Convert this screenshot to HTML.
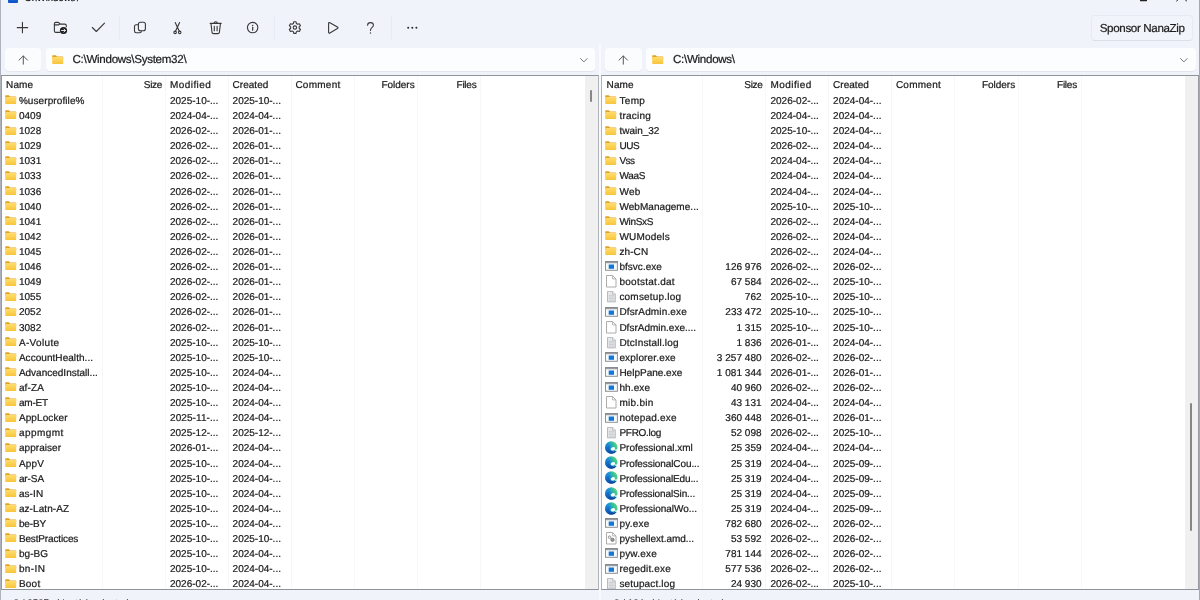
<!DOCTYPE html>
<html lang="en"><head><meta charset="utf-8"><title>C:\Windows\</title>
<style>
*{margin:0;padding:0;box-sizing:border-box}
html,body{width:1200px;height:600px;overflow:hidden;background:#f0f3fa}
body{position:relative;font-family:"Liberation Sans", sans-serif;color:#1a1a1a;font-size:10px;will-change:transform;text-rendering:geometricPrecision;-webkit-text-stroke:0.22px #1a1a1a}
.bl{position:absolute;left:0;top:0;width:1px;height:600px;background:#aeb2bc}
.br{position:absolute;left:1199px;top:0;width:1px;height:600px;background:#a4a8b2}
.split{position:absolute;left:599.4px;top:44px;width:1.4px;height:556px;background:#f8fafd}
.ticon{position:absolute;left:7.6px;top:-8px;width:10px;height:10.8px;background:linear-gradient(#3a8ff0,#0b4fc4);border-radius:1px}
.title{position:absolute;left:24.6px;top:-7.5px;font-size:9.5px;line-height:12px;color:#111;white-space:pre}
.wbtn{position:absolute;top:-8px}
.tb{position:absolute;left:0;top:0}
.sponsor{position:absolute;left:1091px;top:15px;width:102.4px;height:25.5px;border-radius:4px;background:#f2f4fb;border:1px solid #e7eaf2;border-bottom-color:#dcdfe8;font-size:11.6px;letter-spacing:-0.35px;line-height:25.8px;text-align:center;color:#1f1f1f;white-space:nowrap}
.pane{position:absolute;top:0;width:600px;height:600px}
.up{position:absolute;left:4.5px;top:48px;width:36.5px;height:22.6px;border-radius:4px;background:#fbfcfe;box-shadow:0 1px 0 #e4e7ef}
.up svg{position:absolute;left:13.1px;top:6.6px}
.addr{position:absolute;left:45.5px;top:48px;width:549.6px;height:22.6px;border-radius:4px;background:#fcfdff;box-shadow:0 1px 0 #e2e5ed;white-space:nowrap}
.aic{position:absolute;left:6.4px;top:7.2px}
.path{position:absolute;left:27px;top:4.7px;font-size:11.6px;letter-spacing:-0.3px;line-height:14px;color:#1c1c1c;white-space:pre}
.chev{position:absolute;left:534.2px;top:9.6px}
.inner{position:absolute;top:0;width:585px;height:513px}
.list{position:absolute;left:1px;top:75px;width:598px;height:514.7px;background:#fff;border:1px solid #8f939b;border-left-color:var(--bl);border-right-color:var(--brc);overflow:hidden}
.sep{position:absolute;top:0;width:1px;height:513px;background:#f6f7f9}
.hdr{position:absolute;left:0;top:0;width:585px;height:16px;line-height:16px;white-space:nowrap}
.hdr span,.row span{position:absolute;top:0;white-space:pre}
.hdr span{top:4.1px;line-height:12px}
.row{position:absolute;left:0;width:585px;height:15px;line-height:12px;white-space:nowrap}
.row span{top:3.3px}
.ic{position:absolute}
.c1{left:16.9px}
.hdr .c1{left:4px}
.c2{right:425.1px;text-align:right}
.row .c2{right:425.9px}
.c3{left:168px}
.c4{left:230.6px}
.c5{left:293.4px}
.c6{right:172.4px}
.c7{right:110.6px}
.sb{position:absolute;right:0;top:0;width:13px;height:513px;background:#f0f0f0}
.sb i{position:absolute;left:5.2px;width:1.8px;background:#868686;border-radius:1px}
.status{position:absolute;left:13.6px;top:597.6px;font-size:9.8px;line-height:12px;color:#333;white-space:pre;-webkit-text-stroke:0}
</style></head>
<body>
<svg width="0" height="0" style="position:absolute"><defs>
<linearGradient id="fg" x1="0" y1="0" x2="0" y2="1"><stop offset="0" stop-color="#ffdd6c"/><stop offset="1" stop-color="#f8c53c"/></linearGradient>
<linearGradient id="eg" x1="0.1" y1="0.75" x2="0.95" y2="0.3"><stop offset="0" stop-color="#1272cf"/><stop offset="0.45" stop-color="#1e96d0"/><stop offset="0.75" stop-color="#36c29a"/><stop offset="1" stop-color="#5ad776"/></linearGradient>
<linearGradient id="eg3" x1="0" y1="0" x2="0.7" y2="1"><stop offset="0" stop-color="#1a7fd6"/><stop offset="1" stop-color="#0d3f9a"/></linearGradient>
</defs></svg>
<div class="ticon"></div>
<div class="title">C:\Windows\</div>
<svg class="tb" width="1200" height="46" viewBox="0 0 1200 46" fill="none" stroke="#383838" stroke-width="1.1" stroke-linecap="round" stroke-linejoin="round">
<!-- window buttons (clipped) -->
<rect x="1140.5" y="-6" width="6" height="6.6" stroke="#222" stroke-width="1.1"/>
<path d="M1176.6 -8 L1186.6 1 M1186.6 -8 L1176.6 1" stroke="#222" stroke-width="1"/>
<!-- separators -->
<path d="M119.5 15.5 V39.5 M274.5 15.5 V39.5 M391.5 15.5 V39.5" stroke="#e8ebf3" stroke-width="1"/>
<!-- plus -->
<path d="M17.2 27.6 H27.7 M22.45 22.4 V32.8"/>
<!-- new folder -->
<path d="M59.6 32.4 H55.8 Q54.4 32.4 54.4 31 V23.8 Q54.4 22.4 55.8 22.4 H57.9 Q58.5 22.4 59 22.9 L60.2 24.1 H64.8 Q66.3 24.1 66.3 25.6 V26.8"/>
<path d="M54.4 24.9 H57.9 Q58.5 24.9 59 24.5 L59.8 23.8"/>
<circle cx="63.5" cy="30.5" r="3.6" fill="#1c1c1c" stroke="none"/>
<path d="M61.5 30.5 H65.3 M63.9 29 L65.4 30.5 L63.9 32" stroke="#fff" stroke-width="0.9"/>
<!-- check -->
<path d="M92.3 27.5 L96.3 31.5 L104.5 23.2"/>
<!-- copy -->
<rect x="138.4" y="22.2" width="7" height="8.6" rx="2"/>
<path d="M138.2 24.8 H136.2 Q134.5 24.8 134.5 26.5 V31.1 Q134.5 32.8 136.2 32.8 H139.6 Q141.3 32.8 141.3 31.2 V31"/>
<!-- cut -->
<path d="M175.2 22.5 L179.3 31.3 M179.6 22.5 L175.5 31.3"/>
<circle cx="175.1" cy="32.4" r="1.25"/><circle cx="179.7" cy="32.4" r="1.25"/>
<!-- trash -->
<path d="M210.2 23.4 H221.2 M214 23.2 Q214 21.7 215.7 21.7 Q217.4 21.7 217.4 23.2 M211 23.6 L212 32.3 Q212.2 33.6 213.6 33.6 H217.8 Q219.2 33.6 219.4 32.3 L220.4 23.6 M214.3 26.3 V30.8 M217.1 26.3 V30.8"/>
<!-- info -->
<circle cx="252.65" cy="27.6" r="5.2"/>
<path d="M252.65 27.3 V30.2" stroke-width="1.2"/><circle cx="252.65" cy="25.5" r="0.75" fill="#383838" stroke="none"/>
<!-- gear -->
<path d="M293.36 23.59 L293.77 21.81 L296.03 21.81 L296.44 23.59 L297.61 24.26 L299.35 23.73 L300.48 25.68 L299.15 26.93 L299.15 28.27 L300.48 29.52 L299.35 31.47 L297.61 30.94 L296.44 31.61 L296.03 33.39 L293.77 33.39 L293.36 31.61 L292.19 30.94 L290.45 31.47 L289.32 29.52 L290.65 28.27 L290.65 26.93 L289.32 25.68 L290.45 23.73 L292.19 24.26 Z" stroke-linejoin="round"/>
<circle cx="294.9" cy="27.6" r="1.7"/>
<!-- play -->
<path d="M328.6 23.4 Q328.6 22 329.9 22.7 L337.4 27 Q338.6 27.8 337.4 28.6 L329.9 32.9 Q328.6 33.6 328.6 32.2 Z"/>
<!-- question -->
<path d="M367.6 25.2 Q367.6 22.6 370.5 22.6 Q373.4 22.6 373.4 25 Q373.4 26.6 371.9 27.6 Q370.5 28.6 370.5 30.4"/>
<circle cx="370.5" cy="33" r="0.7" fill="#3b3b3b" stroke="none"/>
<!-- more -->
<g fill="#2b2b2b" stroke="none"><circle cx="408.2" cy="27.8" r="1"/><circle cx="412.3" cy="27.8" r="1"/><circle cx="416.4" cy="27.8" r="1"/></g>
</svg>

<div class="sponsor">Sponsor NanaZip</div>
<div class="pane" style="left:0px">
<div class="up"><svg width="11" height="10" viewBox="0 0 11 10"><path d="M5.3 1 V9.2 M1.1 5.1 L5.3 0.9 L9.5 5.1" fill="none" stroke="#555" stroke-width="1" stroke-linecap="round" stroke-linejoin="round"/></svg></div>
<div class="addr"><svg class="aic" width="12" height="10" viewBox="0 0 12 10"><path d="M0.2 1 Q0.2 0.3 0.9 0.3 H3.8 L5 1.5 H10.5 Q11.2 1.5 11.2 2.2 V4 H0.2 Z" fill="#e2a325"/><rect x="0.2" y="2" width="11" height="6.9" rx="0.6" fill="url(#fg)"/></svg><span class="path">C:\Windows\System32\</span><svg class="chev" width="8" height="5" viewBox="0 0 8 5"><path d="M0.6 0.6 L3.9 3.9 L7.2 0.6" fill="none" stroke="#777" stroke-width="1" stroke-linecap="round" stroke-linejoin="round"/></svg></div>
<div class="list" style="left:1.0px;--bl:#979aa2;--brc:#b0b3b9"><div class="inner" style="left:0.0px">
<i class="sep" style="left:99.5px"></i>
<i class="sep" style="left:162.7px"></i>
<i class="sep" style="left:225.7px"></i>
<i class="sep" style="left:288.7px"></i>
<i class="sep" style="left:351.9px"></i>
<i class="sep" style="left:415.3px"></i>
<i class="sep" style="left:478.1px"></i>
<div class="hdr"><span class="c1" style="letter-spacing:0.16px">Name</span><span class="c2" style="letter-spacing:-0.34px">Size</span><span class="c3" style="letter-spacing:0.43px">Modified</span><span class="c4" style="letter-spacing:0.02px">Created</span><span class="c5" style="letter-spacing:0.25px">Comment</span><span class="c6" style="letter-spacing:-0.03px">Folders</span><span class="c7" style="letter-spacing:-0.25px">Files</span></div>
<div class="row" style="top:16.60px"><svg class="ic" style="left:2.9px;top:2.7px" width="12" height="10" viewBox="0 0 12 10"><path d="M0.2 1 Q0.2 0.3 0.9 0.3 H3.8 L5 1.5 H10.5 Q11.2 1.5 11.2 2.2 V4 H0.2 Z" fill="#e2a325"/><rect x="0.2" y="2" width="11" height="6.9" rx="0.6" fill="url(#fg)"/></svg><span class="c1" style="letter-spacing:0.09px">%userprofile%</span><span class="c2"></span><span class="c3">2025-10-...</span><span class="c4">2025-10-...</span></div>
<div class="row" style="top:31.71px"><svg class="ic" style="left:2.9px;top:2.7px" width="12" height="10" viewBox="0 0 12 10"><path d="M0.2 1 Q0.2 0.3 0.9 0.3 H3.8 L5 1.5 H10.5 Q11.2 1.5 11.2 2.2 V4 H0.2 Z" fill="#e2a325"/><rect x="0.2" y="2" width="11" height="6.9" rx="0.6" fill="url(#fg)"/></svg><span class="c1" style="letter-spacing:0.02px">0409</span><span class="c2"></span><span class="c3">2024-04-...</span><span class="c4">2024-04-...</span></div>
<div class="row" style="top:46.82px"><svg class="ic" style="left:2.9px;top:2.7px" width="12" height="10" viewBox="0 0 12 10"><path d="M0.2 1 Q0.2 0.3 0.9 0.3 H3.8 L5 1.5 H10.5 Q11.2 1.5 11.2 2.2 V4 H0.2 Z" fill="#e2a325"/><rect x="0.2" y="2" width="11" height="6.9" rx="0.6" fill="url(#fg)"/></svg><span class="c1" style="letter-spacing:0.02px">1028</span><span class="c2"></span><span class="c3">2026-02-...</span><span class="c4">2026-01-...</span></div>
<div class="row" style="top:61.93px"><svg class="ic" style="left:2.9px;top:2.7px" width="12" height="10" viewBox="0 0 12 10"><path d="M0.2 1 Q0.2 0.3 0.9 0.3 H3.8 L5 1.5 H10.5 Q11.2 1.5 11.2 2.2 V4 H0.2 Z" fill="#e2a325"/><rect x="0.2" y="2" width="11" height="6.9" rx="0.6" fill="url(#fg)"/></svg><span class="c1" style="letter-spacing:0.02px">1029</span><span class="c2"></span><span class="c3">2026-02-...</span><span class="c4">2026-01-...</span></div>
<div class="row" style="top:77.04px"><svg class="ic" style="left:2.9px;top:2.7px" width="12" height="10" viewBox="0 0 12 10"><path d="M0.2 1 Q0.2 0.3 0.9 0.3 H3.8 L5 1.5 H10.5 Q11.2 1.5 11.2 2.2 V4 H0.2 Z" fill="#e2a325"/><rect x="0.2" y="2" width="11" height="6.9" rx="0.6" fill="url(#fg)"/></svg><span class="c1" style="letter-spacing:0.02px">1031</span><span class="c2"></span><span class="c3">2026-02-...</span><span class="c4">2026-01-...</span></div>
<div class="row" style="top:92.15px"><svg class="ic" style="left:2.9px;top:2.7px" width="12" height="10" viewBox="0 0 12 10"><path d="M0.2 1 Q0.2 0.3 0.9 0.3 H3.8 L5 1.5 H10.5 Q11.2 1.5 11.2 2.2 V4 H0.2 Z" fill="#e2a325"/><rect x="0.2" y="2" width="11" height="6.9" rx="0.6" fill="url(#fg)"/></svg><span class="c1" style="letter-spacing:0.02px">1033</span><span class="c2"></span><span class="c3">2026-02-...</span><span class="c4">2026-01-...</span></div>
<div class="row" style="top:107.26px"><svg class="ic" style="left:2.9px;top:2.7px" width="12" height="10" viewBox="0 0 12 10"><path d="M0.2 1 Q0.2 0.3 0.9 0.3 H3.8 L5 1.5 H10.5 Q11.2 1.5 11.2 2.2 V4 H0.2 Z" fill="#e2a325"/><rect x="0.2" y="2" width="11" height="6.9" rx="0.6" fill="url(#fg)"/></svg><span class="c1" style="letter-spacing:0.02px">1036</span><span class="c2"></span><span class="c3">2026-02-...</span><span class="c4">2026-01-...</span></div>
<div class="row" style="top:122.37px"><svg class="ic" style="left:2.9px;top:2.7px" width="12" height="10" viewBox="0 0 12 10"><path d="M0.2 1 Q0.2 0.3 0.9 0.3 H3.8 L5 1.5 H10.5 Q11.2 1.5 11.2 2.2 V4 H0.2 Z" fill="#e2a325"/><rect x="0.2" y="2" width="11" height="6.9" rx="0.6" fill="url(#fg)"/></svg><span class="c1" style="letter-spacing:0.02px">1040</span><span class="c2"></span><span class="c3">2026-02-...</span><span class="c4">2026-01-...</span></div>
<div class="row" style="top:137.48px"><svg class="ic" style="left:2.9px;top:2.7px" width="12" height="10" viewBox="0 0 12 10"><path d="M0.2 1 Q0.2 0.3 0.9 0.3 H3.8 L5 1.5 H10.5 Q11.2 1.5 11.2 2.2 V4 H0.2 Z" fill="#e2a325"/><rect x="0.2" y="2" width="11" height="6.9" rx="0.6" fill="url(#fg)"/></svg><span class="c1" style="letter-spacing:0.02px">1041</span><span class="c2"></span><span class="c3">2026-02-...</span><span class="c4">2026-01-...</span></div>
<div class="row" style="top:152.59px"><svg class="ic" style="left:2.9px;top:2.7px" width="12" height="10" viewBox="0 0 12 10"><path d="M0.2 1 Q0.2 0.3 0.9 0.3 H3.8 L5 1.5 H10.5 Q11.2 1.5 11.2 2.2 V4 H0.2 Z" fill="#e2a325"/><rect x="0.2" y="2" width="11" height="6.9" rx="0.6" fill="url(#fg)"/></svg><span class="c1" style="letter-spacing:0.02px">1042</span><span class="c2"></span><span class="c3">2026-02-...</span><span class="c4">2026-01-...</span></div>
<div class="row" style="top:167.70px"><svg class="ic" style="left:2.9px;top:2.7px" width="12" height="10" viewBox="0 0 12 10"><path d="M0.2 1 Q0.2 0.3 0.9 0.3 H3.8 L5 1.5 H10.5 Q11.2 1.5 11.2 2.2 V4 H0.2 Z" fill="#e2a325"/><rect x="0.2" y="2" width="11" height="6.9" rx="0.6" fill="url(#fg)"/></svg><span class="c1" style="letter-spacing:0.02px">1045</span><span class="c2"></span><span class="c3">2026-02-...</span><span class="c4">2026-01-...</span></div>
<div class="row" style="top:182.81px"><svg class="ic" style="left:2.9px;top:2.7px" width="12" height="10" viewBox="0 0 12 10"><path d="M0.2 1 Q0.2 0.3 0.9 0.3 H3.8 L5 1.5 H10.5 Q11.2 1.5 11.2 2.2 V4 H0.2 Z" fill="#e2a325"/><rect x="0.2" y="2" width="11" height="6.9" rx="0.6" fill="url(#fg)"/></svg><span class="c1" style="letter-spacing:0.02px">1046</span><span class="c2"></span><span class="c3">2026-02-...</span><span class="c4">2026-01-...</span></div>
<div class="row" style="top:197.92px"><svg class="ic" style="left:2.9px;top:2.7px" width="12" height="10" viewBox="0 0 12 10"><path d="M0.2 1 Q0.2 0.3 0.9 0.3 H3.8 L5 1.5 H10.5 Q11.2 1.5 11.2 2.2 V4 H0.2 Z" fill="#e2a325"/><rect x="0.2" y="2" width="11" height="6.9" rx="0.6" fill="url(#fg)"/></svg><span class="c1" style="letter-spacing:0.02px">1049</span><span class="c2"></span><span class="c3">2026-02-...</span><span class="c4">2026-01-...</span></div>
<div class="row" style="top:213.03px"><svg class="ic" style="left:2.9px;top:2.7px" width="12" height="10" viewBox="0 0 12 10"><path d="M0.2 1 Q0.2 0.3 0.9 0.3 H3.8 L5 1.5 H10.5 Q11.2 1.5 11.2 2.2 V4 H0.2 Z" fill="#e2a325"/><rect x="0.2" y="2" width="11" height="6.9" rx="0.6" fill="url(#fg)"/></svg><span class="c1" style="letter-spacing:0.02px">1055</span><span class="c2"></span><span class="c3">2026-02-...</span><span class="c4">2026-01-...</span></div>
<div class="row" style="top:228.14px"><svg class="ic" style="left:2.9px;top:2.7px" width="12" height="10" viewBox="0 0 12 10"><path d="M0.2 1 Q0.2 0.3 0.9 0.3 H3.8 L5 1.5 H10.5 Q11.2 1.5 11.2 2.2 V4 H0.2 Z" fill="#e2a325"/><rect x="0.2" y="2" width="11" height="6.9" rx="0.6" fill="url(#fg)"/></svg><span class="c1" style="letter-spacing:0.02px">2052</span><span class="c2"></span><span class="c3">2026-02-...</span><span class="c4">2026-01-...</span></div>
<div class="row" style="top:243.25px"><svg class="ic" style="left:2.9px;top:2.7px" width="12" height="10" viewBox="0 0 12 10"><path d="M0.2 1 Q0.2 0.3 0.9 0.3 H3.8 L5 1.5 H10.5 Q11.2 1.5 11.2 2.2 V4 H0.2 Z" fill="#e2a325"/><rect x="0.2" y="2" width="11" height="6.9" rx="0.6" fill="url(#fg)"/></svg><span class="c1" style="letter-spacing:0.02px">3082</span><span class="c2"></span><span class="c3">2026-02-...</span><span class="c4">2026-01-...</span></div>
<div class="row" style="top:258.36px"><svg class="ic" style="left:2.9px;top:2.7px" width="12" height="10" viewBox="0 0 12 10"><path d="M0.2 1 Q0.2 0.3 0.9 0.3 H3.8 L5 1.5 H10.5 Q11.2 1.5 11.2 2.2 V4 H0.2 Z" fill="#e2a325"/><rect x="0.2" y="2" width="11" height="6.9" rx="0.6" fill="url(#fg)"/></svg><span class="c1" style="letter-spacing:0.35px">A-Volute</span><span class="c2"></span><span class="c3">2025-10-...</span><span class="c4">2025-10-...</span></div>
<div class="row" style="top:273.47px"><svg class="ic" style="left:2.9px;top:2.7px" width="12" height="10" viewBox="0 0 12 10"><path d="M0.2 1 Q0.2 0.3 0.9 0.3 H3.8 L5 1.5 H10.5 Q11.2 1.5 11.2 2.2 V4 H0.2 Z" fill="#e2a325"/><rect x="0.2" y="2" width="11" height="6.9" rx="0.6" fill="url(#fg)"/></svg><span class="c1" style="letter-spacing:0.05px">AccountHealth...</span><span class="c2"></span><span class="c3">2025-10-...</span><span class="c4">2025-10-...</span></div>
<div class="row" style="top:288.58px"><svg class="ic" style="left:2.9px;top:2.7px" width="12" height="10" viewBox="0 0 12 10"><path d="M0.2 1 Q0.2 0.3 0.9 0.3 H3.8 L5 1.5 H10.5 Q11.2 1.5 11.2 2.2 V4 H0.2 Z" fill="#e2a325"/><rect x="0.2" y="2" width="11" height="6.9" rx="0.6" fill="url(#fg)"/></svg><span class="c1">AdvancedInstall...</span><span class="c2"></span><span class="c3">2025-10-...</span><span class="c4">2024-04-...</span></div>
<div class="row" style="top:303.69px"><svg class="ic" style="left:2.9px;top:2.7px" width="12" height="10" viewBox="0 0 12 10"><path d="M0.2 1 Q0.2 0.3 0.9 0.3 H3.8 L5 1.5 H10.5 Q11.2 1.5 11.2 2.2 V4 H0.2 Z" fill="#e2a325"/><rect x="0.2" y="2" width="11" height="6.9" rx="0.6" fill="url(#fg)"/></svg><span class="c1" style="letter-spacing:0.15px">af-ZA</span><span class="c2"></span><span class="c3">2025-10-...</span><span class="c4">2024-04-...</span></div>
<div class="row" style="top:318.80px"><svg class="ic" style="left:2.9px;top:2.7px" width="12" height="10" viewBox="0 0 12 10"><path d="M0.2 1 Q0.2 0.3 0.9 0.3 H3.8 L5 1.5 H10.5 Q11.2 1.5 11.2 2.2 V4 H0.2 Z" fill="#e2a325"/><rect x="0.2" y="2" width="11" height="6.9" rx="0.6" fill="url(#fg)"/></svg><span class="c1" style="letter-spacing:-0.2px">am-ET</span><span class="c2"></span><span class="c3">2025-10-...</span><span class="c4">2024-04-...</span></div>
<div class="row" style="top:333.91px"><svg class="ic" style="left:2.9px;top:2.7px" width="12" height="10" viewBox="0 0 12 10"><path d="M0.2 1 Q0.2 0.3 0.9 0.3 H3.8 L5 1.5 H10.5 Q11.2 1.5 11.2 2.2 V4 H0.2 Z" fill="#e2a325"/><rect x="0.2" y="2" width="11" height="6.9" rx="0.6" fill="url(#fg)"/></svg><span class="c1" style="letter-spacing:0.1px">AppLocker</span><span class="c2"></span><span class="c3" style="letter-spacing:0.08px">2025-11-...</span><span class="c4">2024-04-...</span></div>
<div class="row" style="top:349.02px"><svg class="ic" style="left:2.9px;top:2.7px" width="12" height="10" viewBox="0 0 12 10"><path d="M0.2 1 Q0.2 0.3 0.9 0.3 H3.8 L5 1.5 H10.5 Q11.2 1.5 11.2 2.2 V4 H0.2 Z" fill="#e2a325"/><rect x="0.2" y="2" width="11" height="6.9" rx="0.6" fill="url(#fg)"/></svg><span class="c1" style="letter-spacing:0.45px">appmgmt</span><span class="c2"></span><span class="c3">2025-12-...</span><span class="c4">2025-12-...</span></div>
<div class="row" style="top:364.13px"><svg class="ic" style="left:2.9px;top:2.7px" width="12" height="10" viewBox="0 0 12 10"><path d="M0.2 1 Q0.2 0.3 0.9 0.3 H3.8 L5 1.5 H10.5 Q11.2 1.5 11.2 2.2 V4 H0.2 Z" fill="#e2a325"/><rect x="0.2" y="2" width="11" height="6.9" rx="0.6" fill="url(#fg)"/></svg><span class="c1" style="letter-spacing:0.06px">appraiser</span><span class="c2"></span><span class="c3">2026-01-...</span><span class="c4">2024-04-...</span></div>
<div class="row" style="top:379.24px"><svg class="ic" style="left:2.9px;top:2.7px" width="12" height="10" viewBox="0 0 12 10"><path d="M0.2 1 Q0.2 0.3 0.9 0.3 H3.8 L5 1.5 H10.5 Q11.2 1.5 11.2 2.2 V4 H0.2 Z" fill="#e2a325"/><rect x="0.2" y="2" width="11" height="6.9" rx="0.6" fill="url(#fg)"/></svg><span class="c1" style="letter-spacing:0.2px">AppV</span><span class="c2"></span><span class="c3">2025-10-...</span><span class="c4">2024-04-...</span></div>
<div class="row" style="top:394.35px"><svg class="ic" style="left:2.9px;top:2.7px" width="12" height="10" viewBox="0 0 12 10"><path d="M0.2 1 Q0.2 0.3 0.9 0.3 H3.8 L5 1.5 H10.5 Q11.2 1.5 11.2 2.2 V4 H0.2 Z" fill="#e2a325"/><rect x="0.2" y="2" width="11" height="6.9" rx="0.6" fill="url(#fg)"/></svg><span class="c1" style="letter-spacing:-0.08px">ar-SA</span><span class="c2"></span><span class="c3">2025-10-...</span><span class="c4">2024-04-...</span></div>
<div class="row" style="top:409.46px"><svg class="ic" style="left:2.9px;top:2.7px" width="12" height="10" viewBox="0 0 12 10"><path d="M0.2 1 Q0.2 0.3 0.9 0.3 H3.8 L5 1.5 H10.5 Q11.2 1.5 11.2 2.2 V4 H0.2 Z" fill="#e2a325"/><rect x="0.2" y="2" width="11" height="6.9" rx="0.6" fill="url(#fg)"/></svg><span class="c1" style="letter-spacing:0.08px">as-IN</span><span class="c2"></span><span class="c3">2025-10-...</span><span class="c4">2024-04-...</span></div>
<div class="row" style="top:424.57px"><svg class="ic" style="left:2.9px;top:2.7px" width="12" height="10" viewBox="0 0 12 10"><path d="M0.2 1 Q0.2 0.3 0.9 0.3 H3.8 L5 1.5 H10.5 Q11.2 1.5 11.2 2.2 V4 H0.2 Z" fill="#e2a325"/><rect x="0.2" y="2" width="11" height="6.9" rx="0.6" fill="url(#fg)"/></svg><span class="c1" style="letter-spacing:0.08px">az-Latn-AZ</span><span class="c2"></span><span class="c3">2025-10-...</span><span class="c4">2024-04-...</span></div>
<div class="row" style="top:439.68px"><svg class="ic" style="left:2.9px;top:2.7px" width="12" height="10" viewBox="0 0 12 10"><path d="M0.2 1 Q0.2 0.3 0.9 0.3 H3.8 L5 1.5 H10.5 Q11.2 1.5 11.2 2.2 V4 H0.2 Z" fill="#e2a325"/><rect x="0.2" y="2" width="11" height="6.9" rx="0.6" fill="url(#fg)"/></svg><span class="c1" style="letter-spacing:-0.1px">be-BY</span><span class="c2"></span><span class="c3">2025-10-...</span><span class="c4">2024-04-...</span></div>
<div class="row" style="top:454.79px"><svg class="ic" style="left:2.9px;top:2.7px" width="12" height="10" viewBox="0 0 12 10"><path d="M0.2 1 Q0.2 0.3 0.9 0.3 H3.8 L5 1.5 H10.5 Q11.2 1.5 11.2 2.2 V4 H0.2 Z" fill="#e2a325"/><rect x="0.2" y="2" width="11" height="6.9" rx="0.6" fill="url(#fg)"/></svg><span class="c1" style="letter-spacing:-0.14px">BestPractices</span><span class="c2"></span><span class="c3">2025-10-...</span><span class="c4">2025-10-...</span></div>
<div class="row" style="top:469.90px"><svg class="ic" style="left:2.9px;top:2.7px" width="12" height="10" viewBox="0 0 12 10"><path d="M0.2 1 Q0.2 0.3 0.9 0.3 H3.8 L5 1.5 H10.5 Q11.2 1.5 11.2 2.2 V4 H0.2 Z" fill="#e2a325"/><rect x="0.2" y="2" width="11" height="6.9" rx="0.6" fill="url(#fg)"/></svg><span class="c1" style="letter-spacing:0.09px">bg-BG</span><span class="c2"></span><span class="c3">2025-10-...</span><span class="c4">2024-04-...</span></div>
<div class="row" style="top:485.01px"><svg class="ic" style="left:2.9px;top:2.7px" width="12" height="10" viewBox="0 0 12 10"><path d="M0.2 1 Q0.2 0.3 0.9 0.3 H3.8 L5 1.5 H10.5 Q11.2 1.5 11.2 2.2 V4 H0.2 Z" fill="#e2a325"/><rect x="0.2" y="2" width="11" height="6.9" rx="0.6" fill="url(#fg)"/></svg><span class="c1" style="letter-spacing:0.42px">bn-IN</span><span class="c2"></span><span class="c3">2025-10-...</span><span class="c4">2024-04-...</span></div>
<div class="row" style="top:500.12px"><svg class="ic" style="left:2.9px;top:2.7px" width="12" height="10" viewBox="0 0 12 10"><path d="M0.2 1 Q0.2 0.3 0.9 0.3 H3.8 L5 1.5 H10.5 Q11.2 1.5 11.2 2.2 V4 H0.2 Z" fill="#e2a325"/><rect x="0.2" y="2" width="11" height="6.9" rx="0.6" fill="url(#fg)"/></svg><span class="c1" style="letter-spacing:0.25px">Boot</span><span class="c2"></span><span class="c3">2026-02-...</span><span class="c4">2024-04-...</span></div>
</div>
<div class="sb"><i style="top:13.6px;height:12.6px"></i></div>
</div>
<div class="status">0 / 3567 object(s) selected</div>
</div>
<div class="pane" style="left:600.5px">
<div class="up"><svg width="11" height="10" viewBox="0 0 11 10"><path d="M5.3 1 V9.2 M1.1 5.1 L5.3 0.9 L9.5 5.1" fill="none" stroke="#555" stroke-width="1" stroke-linecap="round" stroke-linejoin="round"/></svg></div>
<div class="addr"><svg class="aic" width="12" height="10" viewBox="0 0 12 10"><path d="M0.2 1 Q0.2 0.3 0.9 0.3 H3.8 L5 1.5 H10.5 Q11.2 1.5 11.2 2.2 V4 H0.2 Z" fill="#e2a325"/><rect x="0.2" y="2" width="11" height="6.9" rx="0.6" fill="url(#fg)"/></svg><span class="path">C:\Windows\</span><svg class="chev" width="8" height="5" viewBox="0 0 8 5"><path d="M0.6 0.6 L3.9 3.9 L7.2 0.6" fill="none" stroke="#777" stroke-width="1" stroke-linecap="round" stroke-linejoin="round"/></svg></div>
<div class="list" style="left:0.5px;--bl:#b0b3b9;--brc:#979aa2"><div class="inner" style="left:0.5px">
<i class="sep" style="left:99.5px"></i>
<i class="sep" style="left:162.7px"></i>
<i class="sep" style="left:225.7px"></i>
<i class="sep" style="left:288.7px"></i>
<i class="sep" style="left:351.9px"></i>
<i class="sep" style="left:415.3px"></i>
<i class="sep" style="left:478.1px"></i>
<div class="hdr"><span class="c1" style="letter-spacing:0.16px">Name</span><span class="c2" style="letter-spacing:-0.34px">Size</span><span class="c3" style="letter-spacing:0.43px">Modified</span><span class="c4" style="letter-spacing:0.02px">Created</span><span class="c5" style="letter-spacing:0.25px">Comment</span><span class="c6" style="letter-spacing:-0.03px">Folders</span><span class="c7" style="letter-spacing:-0.25px">Files</span></div>
<div class="row" style="top:16.60px"><svg class="ic" style="left:2.9px;top:2.7px" width="12" height="10" viewBox="0 0 12 10"><path d="M0.2 1 Q0.2 0.3 0.9 0.3 H3.8 L5 1.5 H10.5 Q11.2 1.5 11.2 2.2 V4 H0.2 Z" fill="#e2a325"/><rect x="0.2" y="2" width="11" height="6.9" rx="0.6" fill="url(#fg)"/></svg><span class="c1" style="letter-spacing:0.34px">Temp</span><span class="c2"></span><span class="c3">2026-02-...</span><span class="c4">2024-04-...</span></div>
<div class="row" style="top:31.71px"><svg class="ic" style="left:2.9px;top:2.7px" width="12" height="10" viewBox="0 0 12 10"><path d="M0.2 1 Q0.2 0.3 0.9 0.3 H3.8 L5 1.5 H10.5 Q11.2 1.5 11.2 2.2 V4 H0.2 Z" fill="#e2a325"/><rect x="0.2" y="2" width="11" height="6.9" rx="0.6" fill="url(#fg)"/></svg><span class="c1" style="letter-spacing:0.23px">tracing</span><span class="c2"></span><span class="c3">2024-04-...</span><span class="c4">2024-04-...</span></div>
<div class="row" style="top:46.82px"><svg class="ic" style="left:2.9px;top:2.7px" width="12" height="10" viewBox="0 0 12 10"><path d="M0.2 1 Q0.2 0.3 0.9 0.3 H3.8 L5 1.5 H10.5 Q11.2 1.5 11.2 2.2 V4 H0.2 Z" fill="#e2a325"/><rect x="0.2" y="2" width="11" height="6.9" rx="0.6" fill="url(#fg)"/></svg><span class="c1">twain_32</span><span class="c2"></span><span class="c3">2025-10-...</span><span class="c4">2024-04-...</span></div>
<div class="row" style="top:61.93px"><svg class="ic" style="left:2.9px;top:2.7px" width="12" height="10" viewBox="0 0 12 10"><path d="M0.2 1 Q0.2 0.3 0.9 0.3 H3.8 L5 1.5 H10.5 Q11.2 1.5 11.2 2.2 V4 H0.2 Z" fill="#e2a325"/><rect x="0.2" y="2" width="11" height="6.9" rx="0.6" fill="url(#fg)"/></svg><span class="c1" style="letter-spacing:-0.47px">UUS</span><span class="c2"></span><span class="c3">2026-02-...</span><span class="c4">2024-04-...</span></div>
<div class="row" style="top:77.04px"><svg class="ic" style="left:2.9px;top:2.7px" width="12" height="10" viewBox="0 0 12 10"><path d="M0.2 1 Q0.2 0.3 0.9 0.3 H3.8 L5 1.5 H10.5 Q11.2 1.5 11.2 2.2 V4 H0.2 Z" fill="#e2a325"/><rect x="0.2" y="2" width="11" height="6.9" rx="0.6" fill="url(#fg)"/></svg><span class="c1" style="letter-spacing:-0.49px">Vss</span><span class="c2"></span><span class="c3">2024-04-...</span><span class="c4">2024-04-...</span></div>
<div class="row" style="top:92.15px"><svg class="ic" style="left:2.9px;top:2.7px" width="12" height="10" viewBox="0 0 12 10"><path d="M0.2 1 Q0.2 0.3 0.9 0.3 H3.8 L5 1.5 H10.5 Q11.2 1.5 11.2 2.2 V4 H0.2 Z" fill="#e2a325"/><rect x="0.2" y="2" width="11" height="6.9" rx="0.6" fill="url(#fg)"/></svg><span class="c1" style="letter-spacing:-0.29px">WaaS</span><span class="c2"></span><span class="c3">2024-04-...</span><span class="c4">2024-04-...</span></div>
<div class="row" style="top:107.26px"><svg class="ic" style="left:2.9px;top:2.7px" width="12" height="10" viewBox="0 0 12 10"><path d="M0.2 1 Q0.2 0.3 0.9 0.3 H3.8 L5 1.5 H10.5 Q11.2 1.5 11.2 2.2 V4 H0.2 Z" fill="#e2a325"/><rect x="0.2" y="2" width="11" height="6.9" rx="0.6" fill="url(#fg)"/></svg><span class="c1" style="letter-spacing:0.26px">Web</span><span class="c2"></span><span class="c3">2024-04-...</span><span class="c4">2024-04-...</span></div>
<div class="row" style="top:122.37px"><svg class="ic" style="left:2.9px;top:2.7px" width="12" height="10" viewBox="0 0 12 10"><path d="M0.2 1 Q0.2 0.3 0.9 0.3 H3.8 L5 1.5 H10.5 Q11.2 1.5 11.2 2.2 V4 H0.2 Z" fill="#e2a325"/><rect x="0.2" y="2" width="11" height="6.9" rx="0.6" fill="url(#fg)"/></svg><span class="c1" style="letter-spacing:0.05px">WebManageme...</span><span class="c2"></span><span class="c3">2025-10-...</span><span class="c4">2025-10-...</span></div>
<div class="row" style="top:137.48px"><svg class="ic" style="left:2.9px;top:2.7px" width="12" height="10" viewBox="0 0 12 10"><path d="M0.2 1 Q0.2 0.3 0.9 0.3 H3.8 L5 1.5 H10.5 Q11.2 1.5 11.2 2.2 V4 H0.2 Z" fill="#e2a325"/><rect x="0.2" y="2" width="11" height="6.9" rx="0.6" fill="url(#fg)"/></svg><span class="c1" style="letter-spacing:-0.3px">WinSxS</span><span class="c2"></span><span class="c3">2026-02-...</span><span class="c4">2024-04-...</span></div>
<div class="row" style="top:152.59px"><svg class="ic" style="left:2.9px;top:2.7px" width="12" height="10" viewBox="0 0 12 10"><path d="M0.2 1 Q0.2 0.3 0.9 0.3 H3.8 L5 1.5 H10.5 Q11.2 1.5 11.2 2.2 V4 H0.2 Z" fill="#e2a325"/><rect x="0.2" y="2" width="11" height="6.9" rx="0.6" fill="url(#fg)"/></svg><span class="c1" style="letter-spacing:0.21px">WUModels</span><span class="c2"></span><span class="c3">2026-02-...</span><span class="c4">2024-04-...</span></div>
<div class="row" style="top:167.70px"><svg class="ic" style="left:2.9px;top:2.7px" width="12" height="10" viewBox="0 0 12 10"><path d="M0.2 1 Q0.2 0.3 0.9 0.3 H3.8 L5 1.5 H10.5 Q11.2 1.5 11.2 2.2 V4 H0.2 Z" fill="#e2a325"/><rect x="0.2" y="2" width="11" height="6.9" rx="0.6" fill="url(#fg)"/></svg><span class="c1" style="letter-spacing:0.1px">zh-CN</span><span class="c2"></span><span class="c3">2026-02-...</span><span class="c4">2024-04-...</span></div>
<div class="row" style="top:182.81px"><svg class="ic" style="left:2.9px;top:2.6px" width="13" height="10" viewBox="0 0 13 10"><rect x="0.5" y="0.5" width="11.9" height="8.8" fill="#f7fafd" stroke="#8f9297" stroke-width="1"/><rect x="0.2" y="0.2" width="12.5" height="1.7" fill="#85888d"/><rect x="1.2" y="1.9" width="10.5" height="0.9" fill="#d9dde2"/><rect x="3.7" y="3.5" width="5.3" height="4.3" fill="#1278d6"/></svg><span class="c1" style="letter-spacing:0.03px">bfsvc.exe</span><span class="c2" style="letter-spacing:0.02px">126 976</span><span class="c3">2026-02-...</span><span class="c4">2026-02-...</span></div>
<div class="row" style="top:197.92px"><svg class="ic" style="left:3.3px;top:1.5px" width="11" height="13" viewBox="0 0 11 13"><path d="M0.5 0.5 H6.6 L10 3.9 V12 H0.5 Z" fill="#fff" stroke="#a3a3a3" stroke-width="0.9"/><path d="M6.6 0.5 V3.9 H10" fill="none" stroke="#a3a3a3" stroke-width="0.8"/></svg><span class="c1" style="letter-spacing:0.27px">bootstat.dat</span><span class="c2" style="letter-spacing:0.02px">67 584</span><span class="c3">2026-02-...</span><span class="c4">2025-10-...</span></div>
<div class="row" style="top:213.03px"><svg class="ic" style="left:3.3px;top:2.2px" width="11" height="12" viewBox="0 0 11 12"><path d="M1.5 0.4 H6.6 L9.3 3.1 V10.9 H1.5 Z" fill="#e6e8ea" stroke="#a9abad" stroke-width="0.8"/><path d="M6.6 0.4 V3.1 H9.3" fill="#f6f6f6" stroke="#a9abad" stroke-width="0.7"/><path d="M2.8 4.4 H8 M2.8 6 H8 M2.8 7.6 H8 M2.8 9.2 H8" stroke="#c3c5c8" stroke-width="0.8"/></svg><span class="c1" style="letter-spacing:0.2px">comsetup.log</span><span class="c2" style="letter-spacing:0.02px">762</span><span class="c3">2025-10-...</span><span class="c4">2025-10-...</span></div>
<div class="row" style="top:228.14px"><svg class="ic" style="left:2.9px;top:2.6px" width="13" height="10" viewBox="0 0 13 10"><rect x="0.5" y="0.5" width="11.9" height="8.8" fill="#f7fafd" stroke="#8f9297" stroke-width="1"/><rect x="0.2" y="0.2" width="12.5" height="1.7" fill="#85888d"/><rect x="1.2" y="1.9" width="10.5" height="0.9" fill="#d9dde2"/><rect x="3.7" y="3.5" width="5.3" height="4.3" fill="#1278d6"/></svg><span class="c1" style="letter-spacing:0.15px">DfsrAdmin.exe</span><span class="c2" style="letter-spacing:0.02px">233 472</span><span class="c3">2025-10-...</span><span class="c4">2025-10-...</span></div>
<div class="row" style="top:243.25px"><svg class="ic" style="left:3.3px;top:1.5px" width="11" height="13" viewBox="0 0 11 13"><path d="M0.5 0.5 H6.6 L10 3.9 V12 H0.5 Z" fill="#fff" stroke="#a3a3a3" stroke-width="0.9"/><path d="M6.6 0.5 V3.9 H10" fill="none" stroke="#a3a3a3" stroke-width="0.8"/></svg><span class="c1">DfsrAdmin.exe....</span><span class="c2" style="letter-spacing:0.03px">1 315</span><span class="c3">2025-10-...</span><span class="c4">2025-10-...</span></div>
<div class="row" style="top:258.36px"><svg class="ic" style="left:3.3px;top:2.2px" width="11" height="12" viewBox="0 0 11 12"><path d="M1.5 0.4 H6.6 L9.3 3.1 V10.9 H1.5 Z" fill="#e6e8ea" stroke="#a9abad" stroke-width="0.8"/><path d="M6.6 0.4 V3.1 H9.3" fill="#f6f6f6" stroke="#a9abad" stroke-width="0.7"/><path d="M2.8 4.4 H8 M2.8 6 H8 M2.8 7.6 H8 M2.8 9.2 H8" stroke="#c3c5c8" stroke-width="0.8"/></svg><span class="c1" style="letter-spacing:0.14px">DtcInstall.log</span><span class="c2" style="letter-spacing:0.03px">1 836</span><span class="c3">2026-01-...</span><span class="c4">2024-04-...</span></div>
<div class="row" style="top:273.47px"><svg class="ic" style="left:2.9px;top:2.6px" width="13" height="10" viewBox="0 0 13 10"><rect x="0.5" y="0.5" width="11.9" height="8.8" fill="#f7fafd" stroke="#8f9297" stroke-width="1"/><rect x="0.2" y="0.2" width="12.5" height="1.7" fill="#85888d"/><rect x="1.2" y="1.9" width="10.5" height="0.9" fill="#d9dde2"/><rect x="3.7" y="3.5" width="5.3" height="4.3" fill="#1278d6"/></svg><span class="c1" style="letter-spacing:0.16px">explorer.exe</span><span class="c2" style="letter-spacing:0.03px">3 257 480</span><span class="c3">2026-02-...</span><span class="c4">2026-02-...</span></div>
<div class="row" style="top:288.58px"><svg class="ic" style="left:2.9px;top:2.6px" width="13" height="10" viewBox="0 0 13 10"><rect x="0.5" y="0.5" width="11.9" height="8.8" fill="#f7fafd" stroke="#8f9297" stroke-width="1"/><rect x="0.2" y="0.2" width="12.5" height="1.7" fill="#85888d"/><rect x="1.2" y="1.9" width="10.5" height="0.9" fill="#d9dde2"/><rect x="3.7" y="3.5" width="5.3" height="4.3" fill="#1278d6"/></svg><span class="c1">HelpPane.exe</span><span class="c2" style="letter-spacing:0.03px">1 081 344</span><span class="c3">2026-01-...</span><span class="c4">2026-01-...</span></div>
<div class="row" style="top:303.69px"><svg class="ic" style="left:2.9px;top:2.6px" width="13" height="10" viewBox="0 0 13 10"><rect x="0.5" y="0.5" width="11.9" height="8.8" fill="#f7fafd" stroke="#8f9297" stroke-width="1"/><rect x="0.2" y="0.2" width="12.5" height="1.7" fill="#85888d"/><rect x="1.2" y="1.9" width="10.5" height="0.9" fill="#d9dde2"/><rect x="3.7" y="3.5" width="5.3" height="4.3" fill="#1278d6"/></svg><span class="c1" style="letter-spacing:0.12px">hh.exe</span><span class="c2" style="letter-spacing:0.02px">40 960</span><span class="c3">2026-02-...</span><span class="c4">2026-02-...</span></div>
<div class="row" style="top:318.80px"><svg class="ic" style="left:3.3px;top:1.5px" width="11" height="13" viewBox="0 0 11 13"><path d="M0.5 0.5 H6.6 L10 3.9 V12 H0.5 Z" fill="#fff" stroke="#a3a3a3" stroke-width="0.9"/><path d="M6.6 0.5 V3.9 H10" fill="none" stroke="#a3a3a3" stroke-width="0.8"/></svg><span class="c1" style="letter-spacing:0.28px">mib.bin</span><span class="c2" style="letter-spacing:0.02px">43 131</span><span class="c3">2024-04-...</span><span class="c4">2024-04-...</span></div>
<div class="row" style="top:333.91px"><svg class="ic" style="left:2.9px;top:2.6px" width="13" height="10" viewBox="0 0 13 10"><rect x="0.5" y="0.5" width="11.9" height="8.8" fill="#f7fafd" stroke="#8f9297" stroke-width="1"/><rect x="0.2" y="0.2" width="12.5" height="1.7" fill="#85888d"/><rect x="1.2" y="1.9" width="10.5" height="0.9" fill="#d9dde2"/><rect x="3.7" y="3.5" width="5.3" height="4.3" fill="#1278d6"/></svg><span class="c1" style="letter-spacing:0.21px">notepad.exe</span><span class="c2" style="letter-spacing:0.02px">360 448</span><span class="c3">2026-01-...</span><span class="c4">2026-01-...</span></div>
<div class="row" style="top:349.02px"><svg class="ic" style="left:3.3px;top:2.2px" width="11" height="12" viewBox="0 0 11 12"><path d="M1.5 0.4 H6.6 L9.3 3.1 V10.9 H1.5 Z" fill="#e6e8ea" stroke="#a9abad" stroke-width="0.8"/><path d="M6.6 0.4 V3.1 H9.3" fill="#f6f6f6" stroke="#a9abad" stroke-width="0.7"/><path d="M2.8 4.4 H8 M2.8 6 H8 M2.8 7.6 H8 M2.8 9.2 H8" stroke="#c3c5c8" stroke-width="0.8"/></svg><span class="c1" style="letter-spacing:-0.27px">PFRO.log</span><span class="c2" style="letter-spacing:0.02px">52 098</span><span class="c3">2026-02-...</span><span class="c4">2025-10-...</span></div>
<div class="row" style="top:364.13px"><svg class="ic" style="left:2.9px;top:1.1px" width="13" height="13" viewBox="0 0 13 13"><circle cx="6.3" cy="6.45" r="6.25" fill="url(#eg)"/><path d="M0.3 8 C1 11 3.6 12.7 6.3 12.7 C8.8 12.7 11 11.4 12 9.4 C10.4 10.6 7.4 10.8 5.6 9.4 C4 8.2 3.8 6 5 4.4 C2.4 4.6 0.6 6 0.3 8 Z" fill="url(#eg3)"/><ellipse cx="7.9" cy="7.8" rx="2.2" ry="1.7" transform="rotate(-18 7.9 7.8)" fill="#fff"/><path d="M9.4 8.6 L12.9 8.2 L12.9 10 L10.6 9.8 Z" fill="#fff" opacity="0.85"/></svg><span class="c1">Professional.xml</span><span class="c2" style="letter-spacing:0.02px">25 359</span><span class="c3">2024-04-...</span><span class="c4">2024-04-...</span></div>
<div class="row" style="top:379.24px"><svg class="ic" style="left:2.9px;top:1.1px" width="13" height="13" viewBox="0 0 13 13"><circle cx="6.3" cy="6.45" r="6.25" fill="url(#eg)"/><path d="M0.3 8 C1 11 3.6 12.7 6.3 12.7 C8.8 12.7 11 11.4 12 9.4 C10.4 10.6 7.4 10.8 5.6 9.4 C4 8.2 3.8 6 5 4.4 C2.4 4.6 0.6 6 0.3 8 Z" fill="url(#eg3)"/><ellipse cx="7.9" cy="7.8" rx="2.2" ry="1.7" transform="rotate(-18 7.9 7.8)" fill="#fff"/><path d="M9.4 8.6 L12.9 8.2 L12.9 10 L10.6 9.8 Z" fill="#fff" opacity="0.85"/></svg><span class="c1" style="letter-spacing:-0.09px">ProfessionalCou...</span><span class="c2" style="letter-spacing:0.02px">25 319</span><span class="c3">2024-04-...</span><span class="c4">2025-09-...</span></div>
<div class="row" style="top:394.35px"><svg class="ic" style="left:2.9px;top:1.1px" width="13" height="13" viewBox="0 0 13 13"><circle cx="6.3" cy="6.45" r="6.25" fill="url(#eg)"/><path d="M0.3 8 C1 11 3.6 12.7 6.3 12.7 C8.8 12.7 11 11.4 12 9.4 C10.4 10.6 7.4 10.8 5.6 9.4 C4 8.2 3.8 6 5 4.4 C2.4 4.6 0.6 6 0.3 8 Z" fill="url(#eg3)"/><ellipse cx="7.9" cy="7.8" rx="2.2" ry="1.7" transform="rotate(-18 7.9 7.8)" fill="#fff"/><path d="M9.4 8.6 L12.9 8.2 L12.9 10 L10.6 9.8 Z" fill="#fff" opacity="0.85"/></svg><span class="c1" style="letter-spacing:-0.12px">ProfessionalEdu...</span><span class="c2" style="letter-spacing:0.02px">25 319</span><span class="c3">2024-04-...</span><span class="c4">2025-09-...</span></div>
<div class="row" style="top:409.46px"><svg class="ic" style="left:2.9px;top:1.1px" width="13" height="13" viewBox="0 0 13 13"><circle cx="6.3" cy="6.45" r="6.25" fill="url(#eg)"/><path d="M0.3 8 C1 11 3.6 12.7 6.3 12.7 C8.8 12.7 11 11.4 12 9.4 C10.4 10.6 7.4 10.8 5.6 9.4 C4 8.2 3.8 6 5 4.4 C2.4 4.6 0.6 6 0.3 8 Z" fill="url(#eg3)"/><ellipse cx="7.9" cy="7.8" rx="2.2" ry="1.7" transform="rotate(-18 7.9 7.8)" fill="#fff"/><path d="M9.4 8.6 L12.9 8.2 L12.9 10 L10.6 9.8 Z" fill="#fff" opacity="0.85"/></svg><span class="c1" style="letter-spacing:-0.12px">ProfessionalSin...</span><span class="c2" style="letter-spacing:0.02px">25 319</span><span class="c3">2024-04-...</span><span class="c4">2025-09-...</span></div>
<div class="row" style="top:424.57px"><svg class="ic" style="left:2.9px;top:1.1px" width="13" height="13" viewBox="0 0 13 13"><circle cx="6.3" cy="6.45" r="6.25" fill="url(#eg)"/><path d="M0.3 8 C1 11 3.6 12.7 6.3 12.7 C8.8 12.7 11 11.4 12 9.4 C10.4 10.6 7.4 10.8 5.6 9.4 C4 8.2 3.8 6 5 4.4 C2.4 4.6 0.6 6 0.3 8 Z" fill="url(#eg3)"/><ellipse cx="7.9" cy="7.8" rx="2.2" ry="1.7" transform="rotate(-18 7.9 7.8)" fill="#fff"/><path d="M9.4 8.6 L12.9 8.2 L12.9 10 L10.6 9.8 Z" fill="#fff" opacity="0.85"/></svg><span class="c1" style="letter-spacing:-0.04px">ProfessionalWo...</span><span class="c2" style="letter-spacing:0.02px">25 319</span><span class="c3">2024-04-...</span><span class="c4">2025-09-...</span></div>
<div class="row" style="top:439.68px"><svg class="ic" style="left:2.9px;top:2.6px" width="13" height="10" viewBox="0 0 13 10"><rect x="0.5" y="0.5" width="11.9" height="8.8" fill="#f7fafd" stroke="#8f9297" stroke-width="1"/><rect x="0.2" y="0.2" width="12.5" height="1.7" fill="#85888d"/><rect x="1.2" y="1.9" width="10.5" height="0.9" fill="#d9dde2"/><rect x="3.7" y="3.5" width="5.3" height="4.3" fill="#1278d6"/></svg><span class="c1" style="letter-spacing:0.23px">py.exe</span><span class="c2" style="letter-spacing:0.02px">782 680</span><span class="c3">2026-02-...</span><span class="c4">2026-02-...</span></div>
<div class="row" style="top:454.79px"><svg class="ic" style="left:3.3px;top:1.3px" width="11" height="13" viewBox="0 0 11 13"><path d="M0.5 0.5 H6.6 L10 3.9 V12 H0.5 Z" fill="#fff" stroke="#a3a3a3" stroke-width="0.9"/><path d="M6.6 0.5 V3.9 H10" fill="none" stroke="#a3a3a3" stroke-width="0.8"/><circle cx="3.6" cy="5.2" r="1.3" fill="#f2f2f2" stroke="#8c8c8c" stroke-width="0.9"/><circle cx="6.5" cy="7.8" r="1.6" fill="#9a9a9a" stroke="#6e6e6e" stroke-width="0.9"/></svg><span class="c1" style="letter-spacing:-0.02px">pyshellext.amd...</span><span class="c2" style="letter-spacing:0.02px">53 592</span><span class="c3">2026-02-...</span><span class="c4">2026-02-...</span></div>
<div class="row" style="top:469.90px"><svg class="ic" style="left:2.9px;top:2.6px" width="13" height="10" viewBox="0 0 13 10"><rect x="0.5" y="0.5" width="11.9" height="8.8" fill="#f7fafd" stroke="#8f9297" stroke-width="1"/><rect x="0.2" y="0.2" width="12.5" height="1.7" fill="#85888d"/><rect x="1.2" y="1.9" width="10.5" height="0.9" fill="#d9dde2"/><rect x="3.7" y="3.5" width="5.3" height="4.3" fill="#1278d6"/></svg><span class="c1" style="letter-spacing:0.21px">pyw.exe</span><span class="c2" style="letter-spacing:0.02px">781 144</span><span class="c3">2026-02-...</span><span class="c4">2026-02-...</span></div>
<div class="row" style="top:485.01px"><svg class="ic" style="left:2.9px;top:2.6px" width="13" height="10" viewBox="0 0 13 10"><rect x="0.5" y="0.5" width="11.9" height="8.8" fill="#f7fafd" stroke="#8f9297" stroke-width="1"/><rect x="0.2" y="0.2" width="12.5" height="1.7" fill="#85888d"/><rect x="1.2" y="1.9" width="10.5" height="0.9" fill="#d9dde2"/><rect x="3.7" y="3.5" width="5.3" height="4.3" fill="#1278d6"/></svg><span class="c1" style="letter-spacing:0.2px">regedit.exe</span><span class="c2" style="letter-spacing:0.02px">577 536</span><span class="c3">2026-02-...</span><span class="c4">2026-02-...</span></div>
<div class="row" style="top:500.12px"><svg class="ic" style="left:3.3px;top:2.2px" width="11" height="12" viewBox="0 0 11 12"><path d="M1.5 0.4 H6.6 L9.3 3.1 V10.9 H1.5 Z" fill="#e6e8ea" stroke="#a9abad" stroke-width="0.8"/><path d="M6.6 0.4 V3.1 H9.3" fill="#f6f6f6" stroke="#a9abad" stroke-width="0.7"/><path d="M2.8 4.4 H8 M2.8 6 H8 M2.8 7.6 H8 M2.8 9.2 H8" stroke="#c3c5c8" stroke-width="0.8"/></svg><span class="c1" style="letter-spacing:0.15px">setupact.log</span><span class="c2" style="letter-spacing:0.02px">24 930</span><span class="c3">2026-02-...</span><span class="c4">2025-10-...</span></div>
</div>
<div class="sb"><i style="top:327px;height:127.6px"></i></div>
</div>
<div class="status">0 / 104 object(s) selected</div>
</div>
<div class="split"></div><div class="bl"></div><div class="br"></div>
</body></html>
